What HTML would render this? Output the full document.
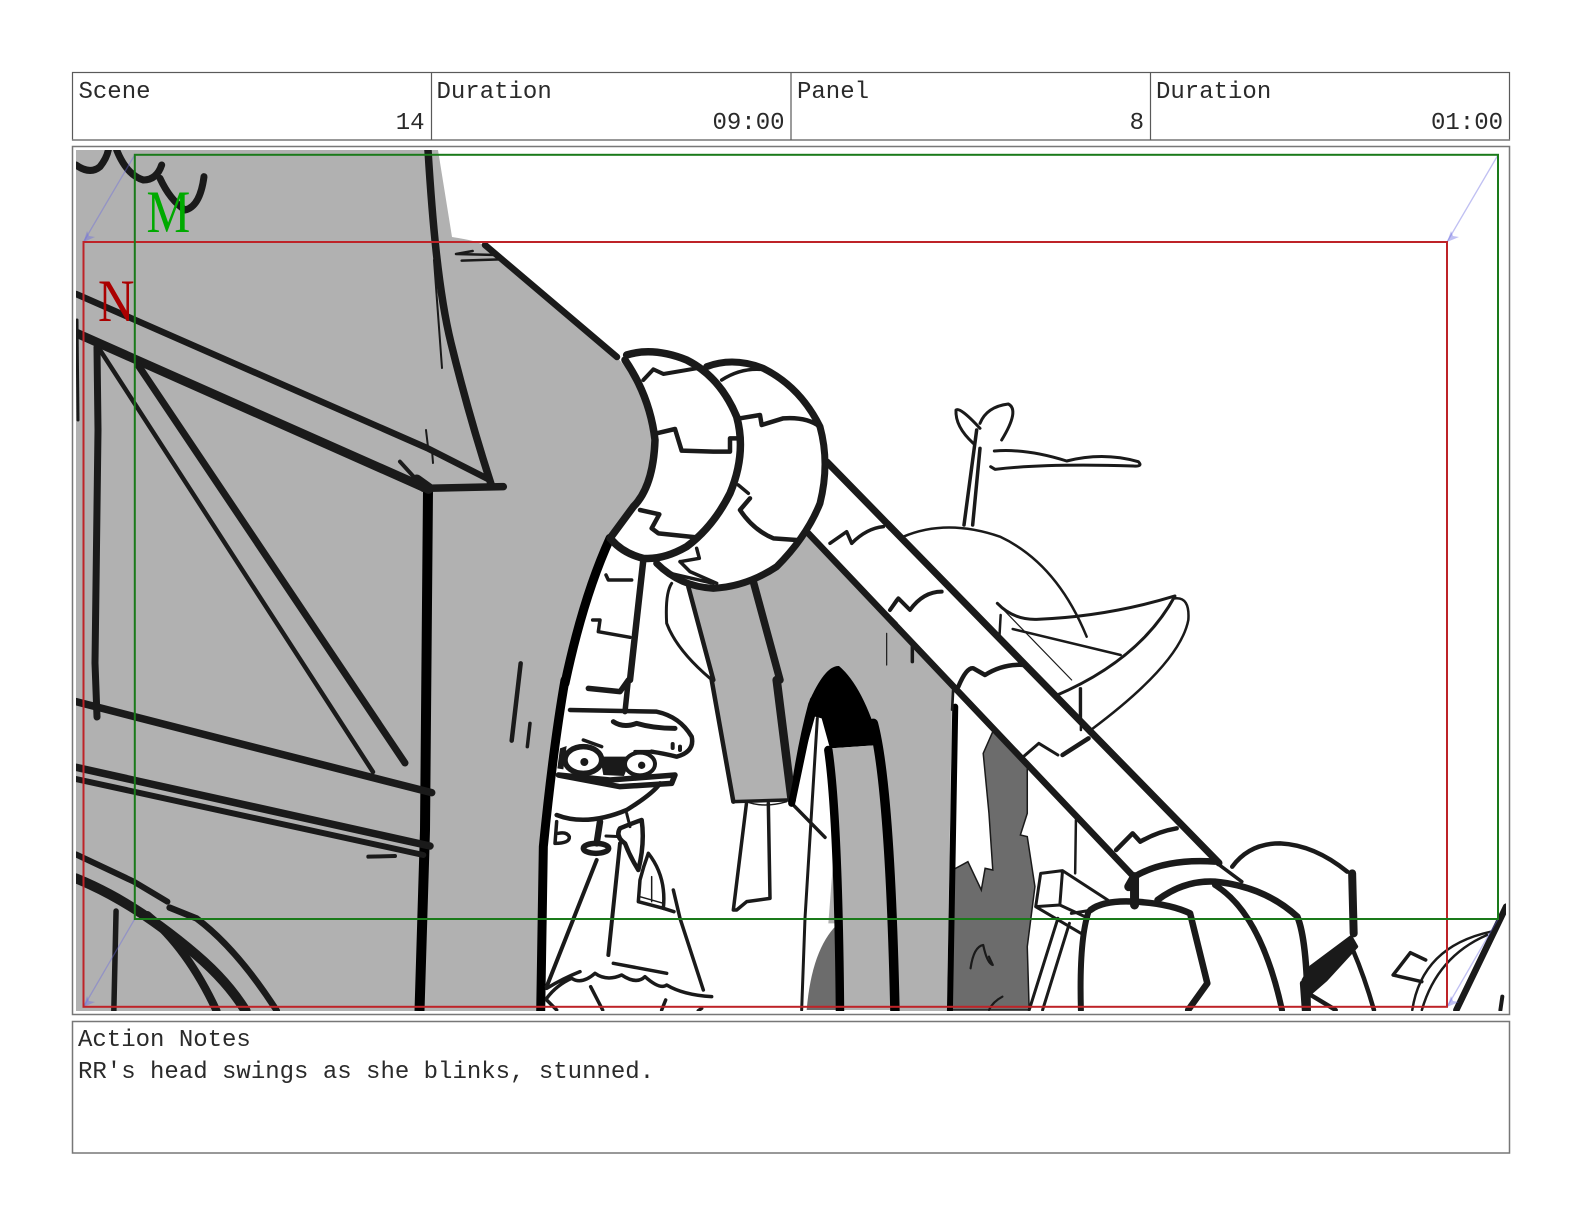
<!DOCTYPE html>
<html><head><meta charset="utf-8"><title>Storyboard</title>
<style>
html,body{margin:0;padding:0;background:#fff}
svg{display:block}
path,ellipse,circle,line{vector-effect:non-scaling-stroke}
.s path,.s ellipse{fill:none;stroke:#1a1a1a;stroke-linecap:round;stroke-linejoin:round}
.s path.k{stroke:#000}
.s path.f{fill:#1a1a1a}
.s path.n{stroke:none}
.s path.b{stroke-linecap:butt}
text.t{font-family:"Liberation Mono",monospace;font-size:24px;fill:#2a2a2a}
</style></head><body>
<svg width="1582" height="1225" viewBox="0 0 1582 1225" xmlns="http://www.w3.org/2000/svg">
<defs><clipPath id="c"><rect x="76" y="150" width="1430" height="861"/></clipPath></defs>

<!-- frames -->
<g fill="none" stroke="#5a5a5a">
<rect x="72.5" y="72.5" width="1437" height="67.5" stroke-width="1.2"/>
<line x1="72" y1="140" x2="1510" y2="140" stroke="#808080" stroke-width="1.5"/>
<line x1="431.5" y1="72" x2="431.5" y2="140" stroke-width="1.2"/>
<line x1="791" y1="72" x2="791" y2="140" stroke-width="1.2"/>
<line x1="1150.5" y1="72" x2="1150.5" y2="140" stroke-width="1.2"/>
<rect x="72.5" y="146.5" width="1437" height="868" stroke="#777" stroke-width="1.5"/>
<rect x="72.5" y="1021.5" width="1437" height="131.5" stroke="#777" stroke-width="1.5"/>
</g>

<text class="t" x="78.5" y="98">Scene</text>
<text class="t" x="436.5" y="98">Duration</text>
<text class="t" x="797" y="98">Panel</text>
<text class="t" x="1156" y="98">Duration</text>
<text class="t" x="424.5" y="129" text-anchor="end">14</text>
<text class="t" x="784.5" y="129" text-anchor="end">09:00</text>
<text class="t" x="1144" y="129" text-anchor="end">8</text>
<text class="t" x="1503" y="129" text-anchor="end">01:00</text>
<text class="t" x="78" y="1046">Action Notes</text>
<text class="t" x="78" y="1078">RR's head swings as she blinks, stunned.</text>

<g clip-path="url(#c)">
<!-- fills -->
<path fill="#b1b1b1" d="M76 150L438 150L452 237Q465 239 473 241L485 245L617 357Q650 395 655 437Q655 480 633 507L610 538Q580 590 565 680Q548 760 543 847L540 1011L76 1011Z"/>
<path fill="#b1b1b1" d="M753 580Q785 565 807 535L955 690L952 700L947 1011L893 1011L890 813L873 723L839 666L813 693L792 800Z"/>
<path fill="#b1b1b1" d="M688 587Q720 592 750 580Q770 640 787 760L791 800L733 802L712 680Z"/>
<g transform="translate(520,680) scale(.33333)">
<path fill="#fff" d="M815 370L860 200L885 110L905 115L925 210L950 500L960 990L840 990L840 500Z"/>
<path fill="#b1b1b1" d="M945 470L955 730L925 730Z"/>
<path fill="#000" d="M808 365Q830 200 865 70Q915 -45 957 -42Q1030 20 1080 195L930 205L905 115L885 110L860 200Z"/>
<path fill="#b1b1b1" d="M930 205L1075 195Q1115 400 1125 990L960 990Q955 500 930 205Z"/>
<path fill="#6c6c6c" d="M860 990Q875 810 950 735L950 990Z"/>
</g>
<g transform="translate(920,680) scale(.3831,.33333)">
<path fill="#6c6c6c" stroke="#1a1a1a" stroke-width="1.5" d="M85 570L125 545L160 630L170 565L190 570L180 400L165 220L190 155L280 250L280 400L262 465L280 470L300 620L280 800L285 990L80 990Z"/>
</g>

<g class="s">
<!-- top-left scallops -->
<g transform="translate(0,50) scale(.33333)">
<path stroke-width="7" d="M228 345Q270 375 300 350Q320 325 325 300"/>
<path stroke-width="7" d="M350 300Q380 375 430 390Q470 390 485 345"/>
<path stroke-width="7" d="M480 385Q510 450 555 480Q600 470 612 380"/>
</g>
<!-- roof, tower -->
<path stroke-width="6.5" d="M76 294L427 448L490 480"/>
<path stroke-width="9" d="M76 333L423 487"/>
<path stroke-width="7" d="M97 347L98 430L95 663L97 717"/>
<path stroke-width="4.5" d="M100 350L373 772"/>
<path stroke-width="7" d="M138 365L405 763"/>
<path stroke-width="3" d="M77 320L78 420"/>
<path stroke-width="7.5" d="M428 150C432 215 438 290 451 343S480 450 491 484"/>
<path stroke-width="2" d="M434 260L442 368"/>
<path stroke-width="2" d="M426 430L428 447M432 450L433 463"/>
<path stroke-width="6.5" d="M485 245L617 357"/>
<g transform="translate(400,150) scale(.33333)">
<path stroke-width="2.5" d="M168 312L218 303M168 312L290 315M185 332L300 328"/>
</g>
<path class="k b" stroke-width="10" d="M428 490L425 830L419.5 1011"/>
<g transform="translate(70,430) scale(.33333)">
<path stroke-width="7.5" d="M1060 175L1300 170"/>
<path stroke-width="11" d="M1040 150L1075 175"/>
<path stroke-width="4" d="M985 145L1050 175M990 95L1040 150"/>
<path stroke-width="7.5" d="M18 815L1085 1088"/>
<path stroke-width="7.5" d="M18 1012L1080 1248"/>
<path stroke-width="6" d="M18 1047L1060 1275"/>
<path stroke-width="4" d="M895 1280L975 1278"/>
<path stroke-width="4.5" d="M1352 700L1325 932"/>
<path stroke-width="3.5" d="M1380 880L1372 950"/>
</g>
<g transform="translate(0,825) scale(.4464,.33333)">
<path stroke-width="6" d="M170 88L300 170L375 230"/>
<path stroke-width="6.5" d="M380 248L440 280Q530 370 620 557"/>
<path stroke-width="10" d="M170 160Q300 230 440 390Q510 470 550 557"/>
<path stroke-width="8" d="M330 270Q420 370 485 557"/>
<path stroke-width="5.5" d="M260 258L255 557"/>
</g>
<!-- outer arch -->
<g transform="translate(500,330) scale(.33333)">
<path class="k" stroke-width="9" d="M330 625Q250 800 195 1060"/>
<path stroke-width="7.5" d="M380 75Q460 50 560 90Q660 140 710 260Q740 370 690 490Q640 590 560 650Q490 690 430 685Q370 670 335 630"/>
<path stroke-width="7.5" d="M375 90Q450 200 465 330Q460 470 400 530L330 625"/>
<path stroke-width="7" d="M620 110Q700 80 790 115Q900 170 960 290Q990 400 960 520Q920 620 830 710Q740 770 640 775Q540 770 470 700"/>
<path stroke-width="4" d="M430 150L460 118L490 132L590 115"/>
<path stroke-width="4.5" d="M470 310L525 297L545 362L640 365L690 365L690 325L720 325"/>
<path stroke-width="4.5" d="M420 540L478 553L455 595L475 610L590 622"/>
<path stroke-width="3.5" d="M665 150Q720 115 780 118"/>
<path stroke-width="4.5" d="M720 265L780 255L785 285L850 265Q920 260 960 290"/>
<path stroke-width="3.5" d="M715 465L745 490"/>
<path stroke-width="4.5" d="M750 505L720 540Q760 600 820 625L890 630"/>
<path stroke-width="3.5" d="M540 695L598 685L590 655M540 695L570 725L650 760M510 730L640 760"/>
<path stroke-width="6.5" d="M430 690L390 1050"/>
<path stroke-width="3.5" d="M318 735L325 750L395 750M278 870L300 870L295 905L390 922"/>
<path stroke-width="3" d="M515 760Q495 790 500 880Q530 960 630 1045"/>
<path stroke-width="4.5" d="M565 770L640 1050"/>
<path stroke-width="7.5" d="M760 755L840 1050"/>
<path stroke-width="2.5" d="M925 615L1190 880"/>
</g>
<!-- character etc -->
<g transform="translate(520,680) scale(.33333)">
<path class="k" stroke-width="9" d="M135 0Q100 200 70 500L62 1000"/>
<path stroke-width="5.5" d="M325 0L315 95M205 25L300 35L325 0"/>
<path stroke-width="4.5" d="M150 90L410 95Q480 110 515 170Q525 215 470 230Q430 220 395 215"/>
<path stroke-width="5" d="M280 125Q310 145 350 130Q400 145 465 145"/>
<path stroke-width="4" d="M458 192L458 204M480 200L480 210"/>
<path stroke-width="3.5" d="M190 180L245 200M345 215L400 215"/>
<path class="f n" d="M120 205L140 198L130 268L112 265ZM240 230L335 230L312 288L250 285Z"/>
<ellipse cx="190" cy="240" rx="55" ry="40" stroke-width="5.5" style="fill:#fff"/>
<ellipse cx="360" cy="252" rx="45" ry="34" stroke-width="4" style="fill:#fff"/>
<circle cx="193" cy="246" r="12" fill="#1a1a1a"/>
<circle cx="365" cy="256" r="11" fill="#1a1a1a"/>
<path stroke-width="5.5" d="M115 285L270 300L465 285L455 310L300 320Z"/>
<path stroke-width="4.5" d="M110 405Q200 440 320 390Q400 340 420 310"/>
<path stroke-width="6.5" d="M240 425L230 490"/>
<ellipse cx="228" cy="505" rx="38" ry="15" stroke-width="5.5"/>
<path stroke-width="3.5" d="M110 425L105 490Q150 490 148 470Q140 455 115 460"/>
<path stroke-width="4.5" d="M300 445Q285 470 315 490Q330 530 355 570Q375 490 365 420Q335 430 300 445"/>
<path stroke-width="3" d="M320 400L330 440M258 468L300 470"/>
<path stroke-width="4" d="M230 540L80 920"/>
<path stroke-width="4" d="M300 490L265 825"/>
<path stroke-width="3.5" d="M280 850L440 880"/>
<path stroke-width="3.5" d="M460 630L480 715L550 930"/>
<path stroke-width="3.5" d="M80 925Q130 895 180 875M80 955Q110 915 155 895Q185 915 225 880Q260 905 305 885Q350 915 375 890Q420 930 440 915Q490 945 575 950"/>
<path stroke-width="3.5" d="M212 920L248 990M437 960L425 990M80 960L110 990M545 985L535 992"/>
<path stroke-width="3.5" d="M385 520Q440 590 430 685L355 665L360 600Q370 560 385 520"/>
<path stroke-width="1.5" d="M395 590L395 665M360 650L430 670"/>
<path stroke-width="3.5" d="M430 685L462 695"/>
<path stroke-width="4.5" d="M575 0L640 365"/>
<path stroke-width="8.5" d="M770 0L815 360"/>
<path stroke-width="3.5" d="M640 365L800 360"/>
<path stroke-width="1.5" d="M680 365Q730 385 800 365"/>
<path stroke-width="3.5" d="M680 365L640 690L650 690L680 665L750 655L745 370"/>
<path stroke-width="3.5" d="M815 370L915 472"/>
<path stroke-width="3" d="M892 115L855 715L845 990"/>
<path class="k" stroke-width="7" d="M815 370L880 60"/>
<path class="k" stroke-width="8.5" d="M925 210Q955 420 960 1000"/>
<path class="k" stroke-width="9.5" d="M1060 130Q1110 320 1125 1000"/>
</g>
<!-- big diagonal band -->
<path stroke-width="7" d="M827 462L1219 863"/>
<path stroke-width="6.5" d="M808 533L1134 877"/>
<path stroke-width="3" d="M830 557L878 606"/>
<g transform="translate(880,390) scale(.33333)">
<path stroke-width="3" d="M280 160Q225 110 228 60Q240 50 300 115M300 100Q320 50 385 42Q420 60 365 150"/>
<path stroke-width="3.5" d="M290 120L252 405M300 175L278 405"/>
<path stroke-width="3" d="M343 183Q440 175 560 213Q670 185 775 215Q790 230 760 228Q500 220 345 238L332 230"/>
<path stroke-width="2.5" d="M70 440Q200 385 360 440Q530 520 620 740"/>
<path stroke-width="3" d="M352 640Q400 690 470 688Q680 680 885 618Q780 810 525 918"/>
<path stroke-width="2.5" d="M885 625Q930 620 925 690Q900 820 635 1018"/>
<path stroke-width="2.5" d="M398 717L722 795"/>
<path stroke-width="1.2" d="M352 640L575 870"/>
<path stroke-width="2.5" d="M362 675L358 745M600 895L600 1000"/>
<path stroke-width="1.2" d="M20 730L20 825"/>
<path stroke-width="3.5" d="M97 760L97 815"/>
<path stroke-width="1.8" d="M218 900L215 960"/>
<path stroke-width="4" d="M30 660L55 625L90 660Q130 605 185 605"/>
<path stroke-width="4.5" d="M235 890Q260 830 280 835L315 855Q370 820 435 825"/>
</g>
<g transform="translate(500,330) scale(.33333)">
<path stroke-width="3.5" d="M990 640L1040 605L1055 640Q1100 595 1150 590"/>
<path stroke-width="3.5" d="M1170 840L1190 810"/>
</g>
<g transform="translate(920,680) scale(.3831,.33333)">
<path class="k" stroke-width="6" d="M92 80L78 1000"/>
<path stroke-width="1.8" d="M88 20L85 90"/>
<path stroke-width="2.5" d="M420 25L420 150M407 420L405 580"/>
<path stroke-width="3" d="M270 230L310 190L360 225"/>
<path stroke-width="4.5" d="M372 225L440 175"/>
<path stroke-width="4.5" d="M512 510L555 460L575 485Q620 455 670 445"/>
<path stroke-width="9" d="M545 620L560 590L560 675"/>
<path stroke-width="6.5" d="M560 590Q640 535 770 545"/>
<path stroke-width="3.5" d="M770 545L840 605"/>
<path stroke-width="4.5" d="M815 560Q860 490 940 490Q1030 495 1115 575"/>
<path stroke-width="8" d="M1128 580L1132 760"/>
<path class="f" stroke-width="3" d="M1020 860L1125 770L1140 800L1060 900L1010 950L1000 900Z"/>
<path stroke-width="4.5" d="M1130 810Q1160 890 1185 990"/>
<path stroke-width="6.5" d="M620 660Q690 600 770 605Q900 620 985 710Q1010 780 1012 990"/>
<path stroke-width="6" d="M770 615Q890 700 945 990"/>
<path stroke-width="6.5" d="M445 690Q480 660 560 665Q650 670 705 700L750 910L700 990"/>
<path stroke-width="6" d="M440 695Q415 780 420 990"/>
<path stroke-width="3" d="M315 580L372 572L365 675L302 680ZM372 572L490 660M302 680L420 760M365 675L440 715M395 700L450 690M360 715L285 990M390 730L320 990"/>
<path stroke-width="3.5" d="M1280 818L1320 840M1280 818L1235 885L1310 905"/>
<path stroke-width="2.5" d="M1285 990Q1310 800 1490 755M1310 990Q1350 830 1480 765"/>
<path stroke-width="6.5" d="M1400 990L1530 680"/>
<path stroke-width="4" d="M1520 950L1515 990"/>
<path stroke-width="4.5" d="M1020 945L1085 990"/>
<path stroke-width="6.5" d="M1000 910L1005 990"/>
<path stroke-width="2.2" d="M132 865Q140 800 165 795Q175 850 190 855L180 830M215 950Q190 965 180 990"/>
</g>
</g>

<!-- camera move arrows -->
<g fill="none" stroke="#6a6ae0" stroke-opacity=".42" stroke-width="1.3">
<path d="M134.7 155L83.5 242M1498 155L1447 242M134.7 919L83.5 1007M1498 919L1447 1007"/>
</g>
<g fill="#6a6ae0" fill-opacity=".42">
<path d="M83.5 242L87 231L89 236L95 237ZM1447 242L1451 231L1453 236L1459 237ZM83.5 1007L87 996L89 1001L95 1002ZM1447 1007L1451 996L1453 1001L1459 1002Z"/>
</g>
</g>

<!-- frames -->
<rect x="83.5" y="242" width="1363.5" height="764.8" fill="none" stroke="#be2328" stroke-width="2"/>
<rect x="134.8" y="154.8" width="1363.2" height="764.2" fill="none" stroke="#1a7a1a" stroke-width="2"/>
<text transform="translate(146.5,232) scale(.82,1)" font-family="'Liberation Serif',serif" font-size="60" fill="#00aa00">M</text>
<text transform="translate(98,321) scale(.84,1)" font-family="'Liberation Serif',serif" font-size="60" fill="#aa0000">N</text>
</svg>
</body></html>
